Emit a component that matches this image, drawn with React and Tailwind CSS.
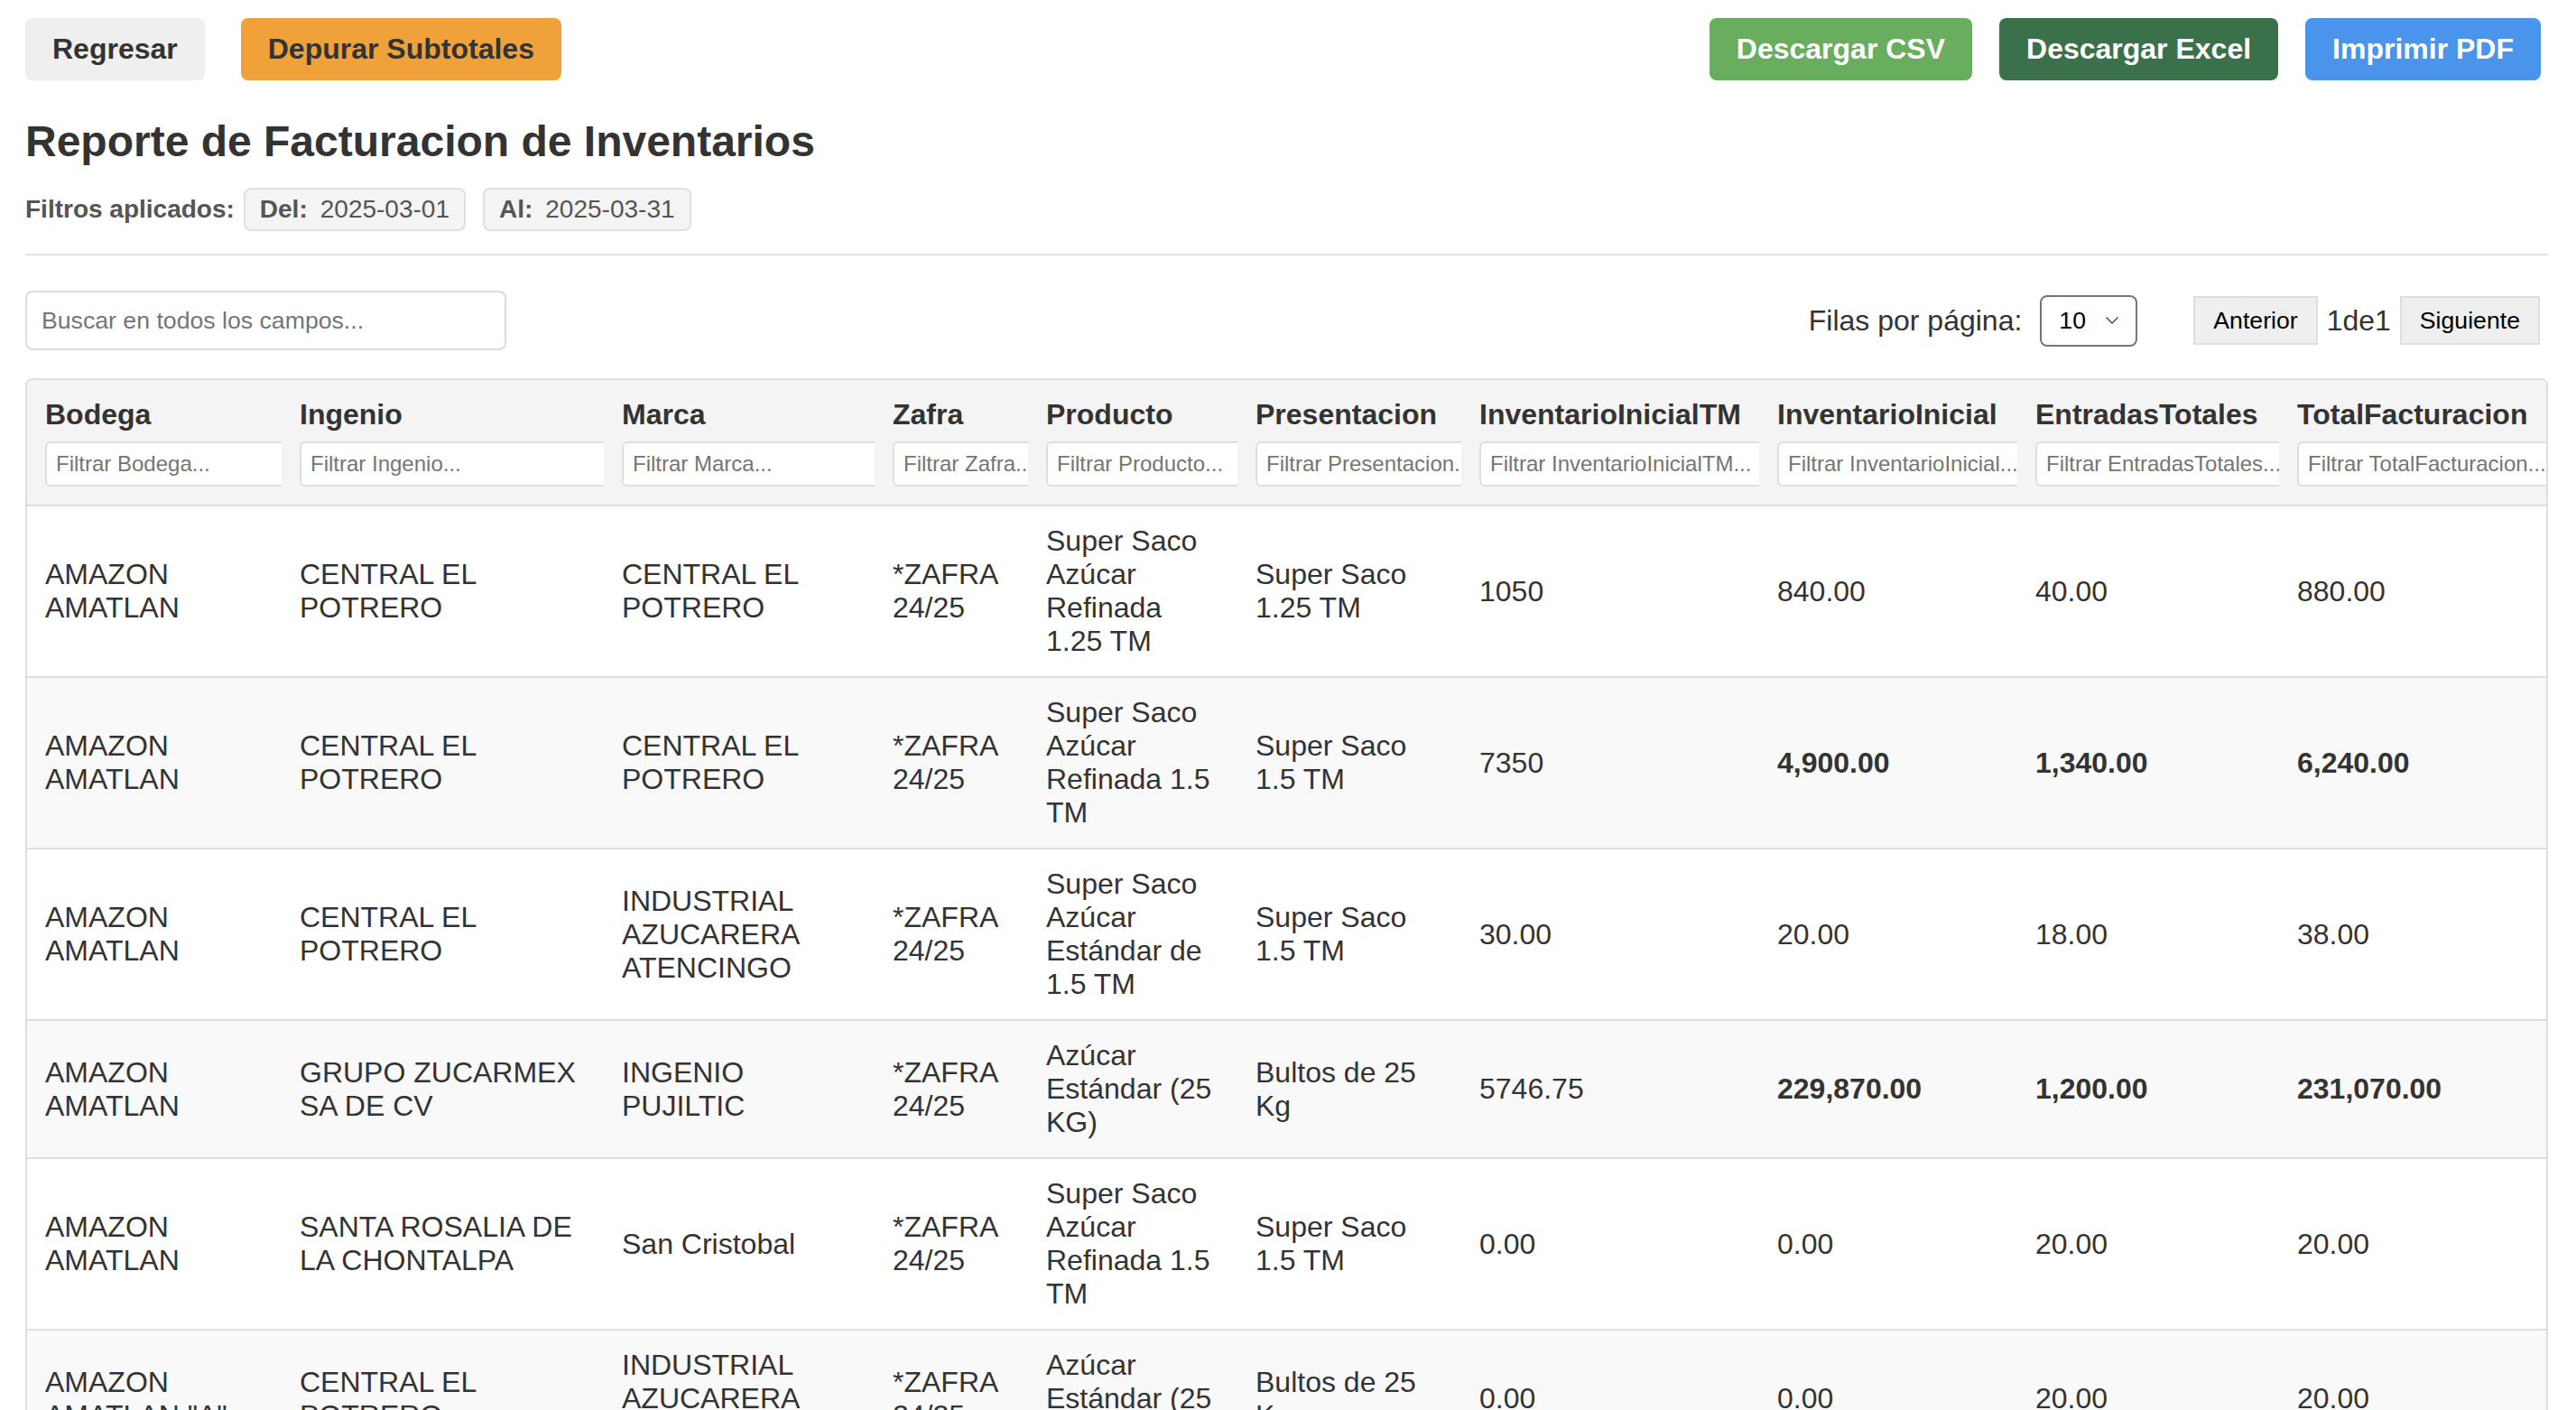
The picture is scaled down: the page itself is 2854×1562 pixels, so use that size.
import React from "react";

const cols = [
  { name: "Bodega", w: "w-[282px]", ph: "Filtrar Bodega..." },
  { name: "Ingenio", w: "w-[357px]", ph: "Filtrar Ingenio..." },
  { name: "Marca", w: "w-[300px]", ph: "Filtrar Marca..." },
  { name: "Zafra", w: "w-[170px]", ph: "Filtrar Zafra..." },
  { name: "Producto", w: "w-[232px]", ph: "Filtrar Producto..." },
  { name: "Presentacion", w: "w-[248px]", ph: "Filtrar Presentacion..." },
  { name: "InventarioInicialTM", w: "w-[330px]", ph: "Filtrar InventarioInicialTM..." },
  { name: "InventarioInicial", w: "w-[286px]", ph: "Filtrar InventarioInicial..." },
  { name: "EntradasTotales", w: "w-[290px]", ph: "Filtrar EntradasTotales..." },
  { name: "TotalFacturacion", w: "w-[296px]", ph: "Filtrar TotalFacturacion..." },
];

const rows = [
  {
    bold: false,
    c: [
      ["AMAZON", "AMATLAN"],
      ["CENTRAL EL", "POTRERO"],
      ["CENTRAL EL", "POTRERO"],
      ["*ZAFRA", "24/25"],
      ["Super Saco", "Azúcar", "Refinada", "1.25 TM"],
      ["Super Saco", "1.25 TM"],
      ["1050"],
      ["840.00"],
      ["40.00"],
      ["880.00"],
    ],
  },
  {
    bold: true,
    c: [
      ["AMAZON", "AMATLAN"],
      ["CENTRAL EL", "POTRERO"],
      ["CENTRAL EL", "POTRERO"],
      ["*ZAFRA", "24/25"],
      ["Super Saco", "Azúcar", "Refinada 1.5", "TM"],
      ["Super Saco", "1.5 TM"],
      ["7350"],
      ["4,900.00"],
      ["1,340.00"],
      ["6,240.00"],
    ],
  },
  {
    bold: false,
    c: [
      ["AMAZON", "AMATLAN"],
      ["CENTRAL EL", "POTRERO"],
      ["INDUSTRIAL", "AZUCARERA", "ATENCINGO"],
      ["*ZAFRA", "24/25"],
      ["Super Saco", "Azúcar", "Estándar de", "1.5 TM"],
      ["Super Saco", "1.5 TM"],
      ["30.00"],
      ["20.00"],
      ["18.00"],
      ["38.00"],
    ],
  },
  {
    bold: true,
    c: [
      ["AMAZON", "AMATLAN"],
      ["GRUPO ZUCARMEX", "SA DE CV"],
      ["INGENIO", "PUJILTIC"],
      ["*ZAFRA", "24/25"],
      ["Azúcar", "Estándar (25", "KG)"],
      ["Bultos de 25", "Kg"],
      ["5746.75"],
      ["229,870.00"],
      ["1,200.00"],
      ["231,070.00"],
    ],
  },
  {
    bold: false,
    c: [
      ["AMAZON", "AMATLAN"],
      ["SANTA ROSALIA DE", "LA CHONTALPA"],
      ["San Cristobal"],
      ["*ZAFRA", "24/25"],
      ["Super Saco", "Azúcar", "Refinada 1.5", "TM"],
      ["Super Saco", "1.5 TM"],
      ["0.00"],
      ["0.00"],
      ["20.00"],
      ["20.00"],
    ],
  },
  {
    bold: false,
    c: [
      ["AMAZON", 'AMATLAN "A"'],
      ["CENTRAL EL", "POTRERO"],
      ["INDUSTRIAL", "AZUCARERA", "ATENCINGO"],
      ["*ZAFRA", "24/25"],
      ["Azúcar", "Estándar (25", "KG)"],
      ["Bultos de 25", "Kg"],
      ["0.00"],
      ["0.00"],
      ["20.00"],
      ["20.00"],
    ],
  },
];

function Lines({ lines }) {
  return lines.map((l, i) => (
    <React.Fragment key={i}>
      {i > 0 && <br />}
      {l}
    </React.Fragment>
  ));
}

export default function App() {
  return (
    <div className="min-h-screen bg-white pl-[28px] pr-[31px] pt-[20px] font-['Liberation_Sans',Arial,sans-serif] text-[#333]">
      {/* top buttons */}
      <div className="flex items-center justify-between">
        <div className="flex items-center gap-[40px]">
          <button className="rounded-[8px] bg-[#efefef] px-[30px] py-[16px] text-[32px] font-bold leading-[37px] text-[#333]">
            Regresar
          </button>
          <button className="rounded-[8px] bg-[#f1a13a] px-[30px] py-[16px] text-[32px] font-bold leading-[37px] text-[#333]">
            Depurar Subtotales
          </button>
        </div>
        <div className="mr-[8px] flex items-center gap-[30px]">
          <button className="rounded-[8px] bg-[#69ad5e] px-[30px] py-[16px] text-[32px] font-bold leading-[37px] text-white">
            Descargar CSV
          </button>
          <button className="rounded-[8px] bg-[#3b714a] px-[30px] py-[16px] text-[32px] font-bold leading-[37px] text-white">
            Descargar Excel
          </button>
          <button className="rounded-[8px] bg-[#4a94eb] px-[30px] py-[16px] text-[32px] font-bold leading-[37px] text-white">
            Imprimir PDF
          </button>
        </div>
      </div>

      {/* title */}
      <h1 className="mt-[40px] text-[48px] font-bold leading-[55px] text-[#333]">
        Reporte de Facturacion de Inventarios
      </h1>

      {/* filtros */}
      <div className="mt-[24px] flex items-center text-[28px] leading-[32px] text-[#555]">
        <span className="font-bold">Filtros aplicados:</span>
        <span className="ml-[10px] rounded-[8px] border-2 border-[#e0e0e0] bg-[#f4f4f4] px-[16px] py-[6px]">
          <span className="font-bold">Del:</span>
          <span className="ml-[14px]">2025-03-01</span>
        </span>
        <span className="ml-[19px] rounded-[8px] border-2 border-[#e0e0e0] bg-[#f4f4f4] px-[16px] py-[6px]">
          <span className="font-bold">Al:</span>
          <span className="ml-[14px]">2025-03-31</span>
        </span>
      </div>

      <div className="mt-[25px] border-t-2 border-[#e0e0e0]" />

      {/* search + pagination */}
      <div className="mt-[39px] flex items-center justify-between">
        <input
          type="text"
          placeholder="Buscar en todos los campos..."
          className="h-[66px] w-[533px] rounded-[8px] border-2 border-[#dcdcdc] bg-white pl-[16px] text-[26.67px] text-[#333] outline-none placeholder:text-[#757575]"
        />
        <div className="mr-[9px] flex items-center">
          <span className="text-[32px] leading-[37px] text-[#333]">Filas por página:</span>
          <div className="relative ml-[20px] h-[57px] w-[108px]">
            <select
              defaultValue="10"
              className="h-full w-full appearance-none rounded-[8px] border-2 border-[#767676] bg-white pl-[19px] text-[26.67px] text-black outline-none"
            >
              <option value="5">5</option>
              <option value="10">10</option>
              <option value="20">20</option>
              <option value="50">50</option>
            </select>
            <svg
              className="pointer-events-none absolute right-[20px] top-[23px]"
              width="16"
              height="10"
              viewBox="0 0 16 10"
              fill="none"
            >
              <path d="M1.5 1.5 L8 8 L14.5 1.5" stroke="#444" strokeWidth="1.4" />
            </svg>
          </div>
          <button className="ml-[62px] h-[54px] border-2 border-[#dedede] bg-[#efefef] px-[20px] text-[26.67px] text-black">
            Anterior
          </button>
          <span className="mx-[10px] text-[32px] leading-[37px] text-[#333]">1de1</span>
          <button className="h-[54px] border-2 border-[#dedede] bg-[#efefef] px-[20px] text-[26.67px] text-black">
            Siguiente
          </button>
        </div>
      </div>

      {/* table */}
      <div className="mt-[31px] overflow-hidden rounded-[8px] border-2 border-[#dedede]">
        <table className="w-full table-fixed border-separate border-spacing-0">
          <colgroup>
            {cols.map((c) => (
              <col key={c.name} className={c.w} />
            ))}
          </colgroup>
          <thead>
            <tr className="bg-[#f4f4f4]">
              {cols.map((c) => (
                <th
                  key={c.name}
                  className="border-b-2 border-[#dedede] px-[20px] py-[20px] text-left align-top"
                >
                  <div className="whitespace-nowrap text-[32px] font-bold leading-[37px] text-[#333]">
                    {c.name}
                  </div>
                  <div className="-mr-[20px] mt-[11px] overflow-hidden">
                    <input
                      type="text"
                      placeholder={c.ph}
                      className="h-[50px] w-[calc(100%+24px)] rounded-[6px] border-2 border-[#dedede] bg-white pl-[10px] pr-[20px] text-[24px] font-normal text-[#333] outline-none placeholder:text-[#757575]"
                    />
                  </div>
                </th>
              ))}
            </tr>
          </thead>
          <tbody>
            {rows.map((r, ri) => (
              <tr key={ri} className={ri % 2 === 1 ? "bg-[#f9f9f9]" : "bg-white"}>
                {r.c.map((cell, ci) => (
                  <td
                    key={ci}
                    className={
                      "whitespace-nowrap border-b-2 border-[#dedede] px-[20px] py-[20px] align-middle text-[32px] leading-[37px] text-[#333] " +
                      (r.bold && ci >= 7 ? "font-bold" : "font-normal")
                    }
                  >
                    <Lines lines={cell} />
                  </td>
                ))}
              </tr>
            ))}
          </tbody>
        </table>
      </div>
    </div>
  );
}
